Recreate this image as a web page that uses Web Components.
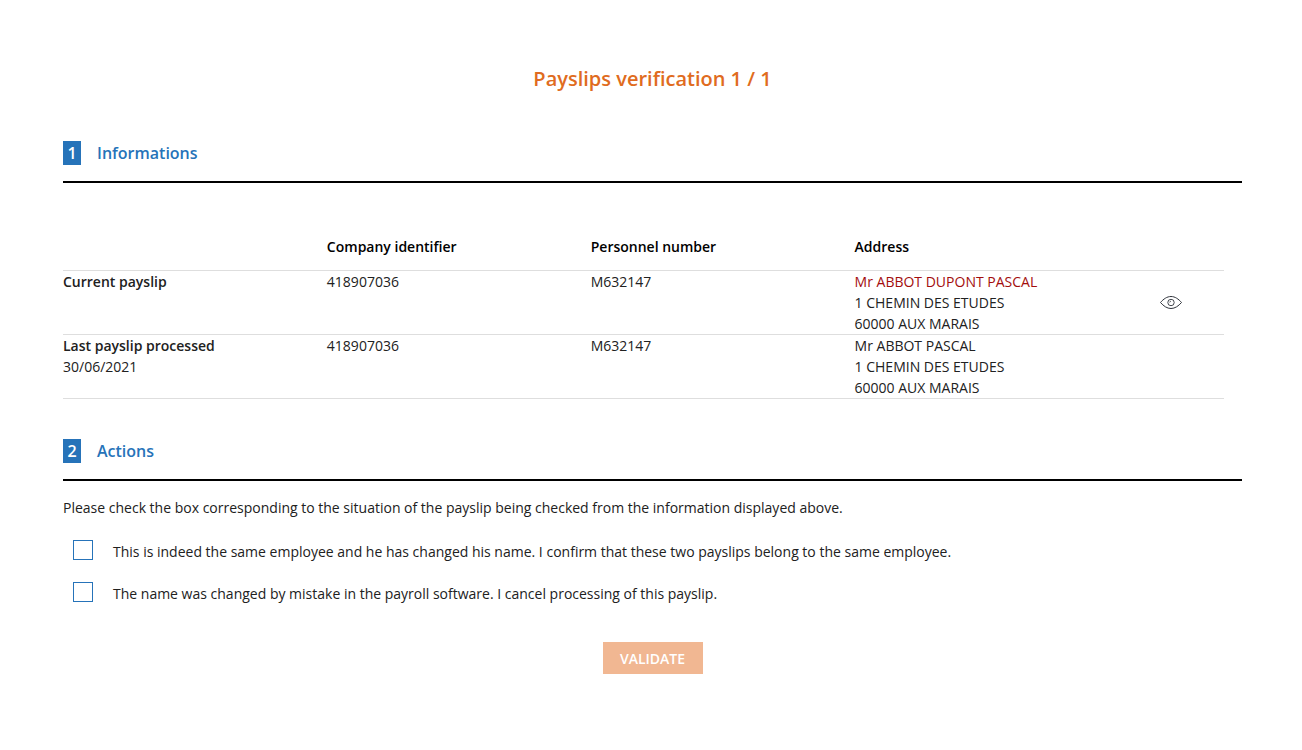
<!DOCTYPE html>
<html lang="en">
<head>
<meta charset="utf-8">
<title>Payslips verification</title>
<style>
  body {
    margin: 0;
    background: #fff;
    color: #212121;
    font: 14px/21px "Open Sans", sans-serif;
  }
</style>
</head>
<body>
<payslip-check></payslip-check>

<script>
class StepSection extends HTMLElement {
  constructor() {
    super();
    this.attachShadow({ mode: "open" });
  }

  static get styles() {
    return /* css */`
      :host {
        display: block;
      }

      header {
        display: flex;
        align-items: center;
        gap: 16px;
        padding-bottom: 16px;
        border-bottom: 2px solid #000;
      }

      .number {
        width: 18px;
        background: #2673b9;
        color: #fff;
        text-align: center;
      }

      .number, h2 {
        margin: 0;
        font-size: 16px;
        font-weight: 600;
        line-height: 24px;
      }

      h2 {
        color: #2673b9;
      }
    `;
  }

  connectedCallback() {
    this.render();
  }

  render() {
    this.shadowRoot.innerHTML = /* html */`
    <style>${StepSection.styles}</style>
    <section>
      <header>
        <span class="number">${this.getAttribute("number")}</span>
        <h2>${this.getAttribute("heading")}</h2>
      </header>
      <slot></slot>
    </section>`;
  }
}

customElements.define("step-section", StepSection);

class EyeButton extends HTMLElement {
  constructor() {
    super();
    this.attachShadow({ mode: "open" });
  }

  static get styles() {
    return /* css */`
      :host {
        display: flex;
        justify-content: center;
      }

      button {
        display: block;
        padding: 0;
        border: 0;
        background: none;
        cursor: pointer;
      }

      svg {
        display: block;
        width: 24px;
        height: 16px;
        fill: none;
        stroke: #30343c;
      }
    `;
  }

  connectedCallback() {
    this.render();
  }

  render() {
    this.shadowRoot.innerHTML = /* html */`
    <style>${EyeButton.styles}</style>
    <button type="button" aria-label="View payslip">
      <svg viewBox="0 0 24 16" aria-hidden="true">
        <path d="M1.5 7.500C4.500 4 8 1.500 12 1.500S19.500 4 22.500 7.500C19.500 11 16 13.500 12 13.500S4.500 11 1.500 7.500Z"/>
        <circle cx="12" cy="7.500" r="3.200" stroke-width=".9"/>
        <path d="M10.700 7.500a1.300 1.300 0 0 1 1.300-1.300" stroke-width=".7"/>
      </svg>
    </button>`;
  }
}

customElements.define("eye-button", EyeButton);

class PayslipTable extends HTMLElement {
  constructor() {
    super();
    this.attachShadow({ mode: "open" });
  }

  static get styles() {
    return /* css */`
      :host {
        display: block;
        padding: 48px 18px 40px 0;
      }

      table {
        width: 100%;
        table-layout: fixed;
        border-collapse: separate;
        border-spacing: 0;
      }

      th, td {
        padding: 0;
        border-bottom: 1px solid #dedede;
        text-align: left;
        vertical-align: top;
        font-weight: 400;
      }

      thead th, strong {
        font-weight: 600;
      }

      thead th, thead td {
        width: 25%;
        padding: 5px 0 13px;
        color: #000;
      }

      thead .view {
        width: 10%;
      }

      tbody .view {
        vertical-align: middle;
      }

      strong, .name {
        display: block;
      }

      .changed {
        color: #a30d0d;
      }
    `;
  }

  get rows() {
    return [
      { label: "Current payslip", date: "", name: "Mr ABBOT DUPONT PASCAL", changed: true },
      { label: "Last payslip processed", date: "30/06/2021", name: "Mr ABBOT PASCAL", changed: false },
    ];
  }

  connectedCallback() {
    this.render();
  }

  renderRow(row) {
    return /* html */`
      <tr>
        <th scope="row"><strong>${row.label}</strong>${row.date}</th>
        <td>418907036</td>
        <td>M632147</td>
        <td><span class="name ${row.changed ? "changed" : ""}">${row.name}</span>1 CHEMIN DES ETUDES<br>60000 AUX MARAIS</td>
        <td class="view">${row.changed ? "<eye-button></eye-button>" : ""}</td>
      </tr>`;
  }

  render() {
    this.shadowRoot.innerHTML = /* html */`
    <style>${PayslipTable.styles}</style>
    <table>
      <thead>
        <tr>
          <td></td>
          <th scope="col">Company identifier</th>
          <th scope="col">Personnel number</th>
          <th scope="col">Address</th>
          <td class="view"></td>
        </tr>
      </thead>
      <tbody>${this.rows.map(row => this.renderRow(row)).join("")}</tbody>
    </table>`;
  }
}

customElements.define("payslip-table", PayslipTable);

class CheckOption extends HTMLElement {
  constructor() {
    super();
    this.attachShadow({ mode: "open" });
  }

  static get styles() {
    return /* css */`
      :host {
        display: block;
      }

      label {
        display: flex;
        align-items: flex-start;
        gap: 20px;
      }

      input {
        appearance: none;
        flex: none;
        width: 20px;
        height: 20px;
        margin: 0;
        border: 1px solid #2673b9;
        background: #fff;
      }

      input:checked {
        background: #2673b9;
        box-shadow: inset 0 0 0 3px #fff;
      }

      span {
        padding-top: 1px;
      }
    `;
  }

  connectedCallback() {
    this.render();
  }

  render() {
    this.shadowRoot.innerHTML = /* html */`
    <style>${CheckOption.styles}</style>
    <label>
      <input type="checkbox">
      <span><slot></slot></span>
    </label>`;
  }
}

customElements.define("check-option", CheckOption);

class PayslipCheck extends HTMLElement {
  constructor() {
    super();
    this.attachShadow({ mode: "open" });
  }

  static get styles() {
    return /* css */`
      :host {
        display: block;
        padding: 64px 60px 64px 63px;
      }

      h1 {
        margin: 0 0 47px;
        color: #e06b20;
        font-size: 20px;
        font-weight: 600;
        line-height: 30px;
        text-align: center;
      }

      p {
        margin: 16px 0 22px;
      }

      .options {
        display: grid;
        gap: 20px;
        padding-left: 10px;
      }

      .submit {
        display: block;
        width: 100px;
        height: 32px;
        margin: 38px auto 0;
        padding: 0;
        border: 0;
        background: #f1b792;
        color: #fff;
        font: inherit;
        font-weight: 600;
      }
    `;
  }

  connectedCallback() {
    this.render();
  }

  render() {
    this.shadowRoot.innerHTML = /* html */`
    <style>${PayslipCheck.styles}</style>
    <main>
      <h1>Payslips verification 1 / 1</h1>
      <step-section number="1" heading="Informations">
        <payslip-table></payslip-table>
      </step-section>
      <step-section number="2" heading="Actions">
        <p>Please check the box corresponding to the situation of the payslip being checked from the information displayed above.</p>
        <div class="options">
          <check-option>This is indeed the same employee and he has changed his name. I confirm that these two payslips belong to the same employee.</check-option>
          <check-option>The name was changed by mistake in the payroll software. I cancel processing of this payslip.</check-option>
        </div>
        <button class="submit" type="button" disabled>VALIDATE</button>
      </step-section>
    </main>`;
  }
}

customElements.define("payslip-check", PayslipCheck);
</script>
</body>
</html>
